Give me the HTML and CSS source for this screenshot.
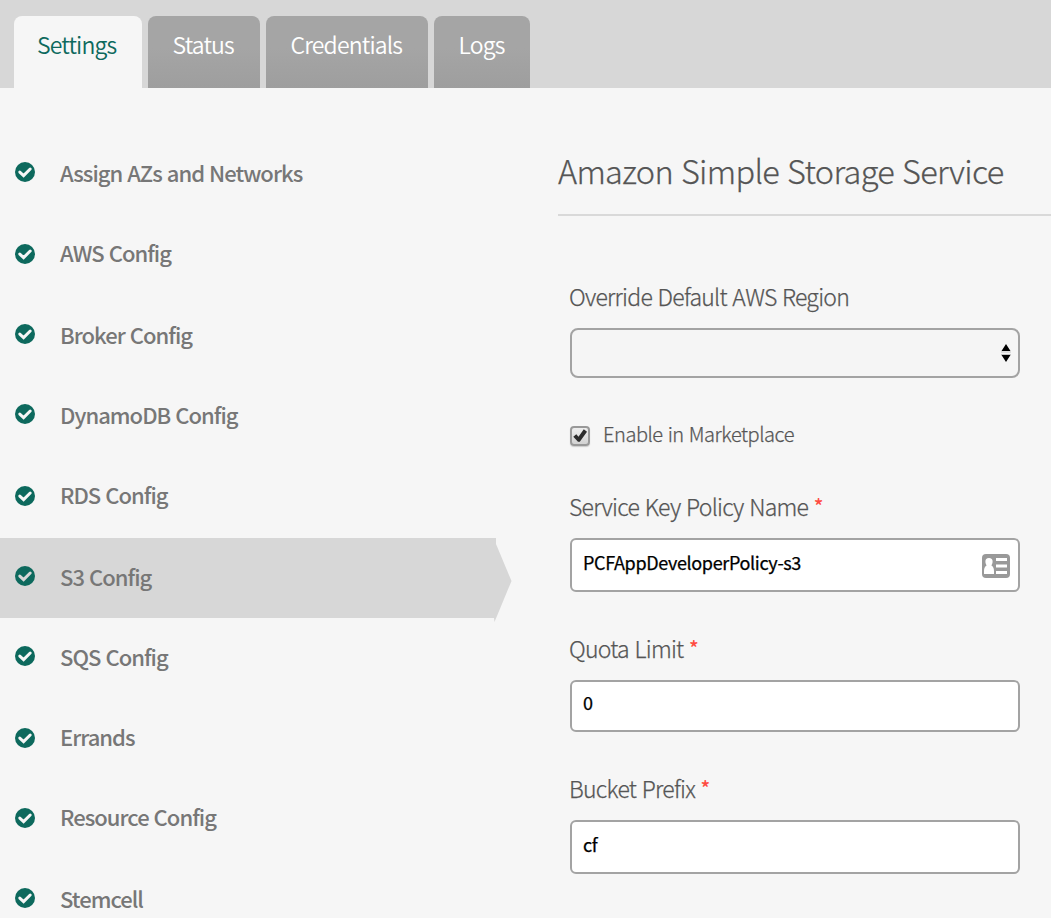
FILE: index.html
```html
<!DOCTYPE html>
<html lang="en">
<head>
<meta charset="utf-8">
<title>Amazon Simple Storage Service</title>
<link rel="stylesheet" href="styles.css">
</head>
<body>
<svg class="defs" width="0" height="0">
  <symbol id="ok" viewBox="0 0 20 20"><circle cx="10" cy="10" r="10" fill="#0d695d"/><path d="M4.8 10.1 8.6 13.6 15.2 7" fill="none" stroke="currentColor" stroke-width="3" stroke-linecap="round" stroke-linejoin="miter"/></symbol>
</svg>
<header class="tabs">
  <a class="tab tab-active"><span>Settings</span></a>
  <a class="tab tab-status"><span>Status</span></a>
  <a class="tab tab-credentials"><span>Credentials</span></a>
  <a class="tab tab-logs"><span>Logs</span></a>
</header>
<main class="page">
  <nav class="nav">
    <a class="item"><svg class="ok"><use href="#ok"/></svg><span>Assign AZs and Networks</span></a>
    <a class="item tall low"><svg class="ok"><use href="#ok"/></svg><span>AWS Config</span></a>
    <a class="item"><svg class="ok"><use href="#ok"/></svg><span>Broker Config</span></a>
    <a class="item"><svg class="ok"><use href="#ok"/></svg><span>DynamoDB Config</span></a>
    <a class="item tall low"><svg class="ok"><use href="#ok"/></svg><span>RDS Config</span></a>
    <a class="item active"><svg class="ok"><use href="#ok"/></svg><span>S3 Config</span><svg class="arrow" viewBox="0 0 18 84"><path d="M0 0H2V6L17.5 43 .5 84 0 80Z"/></svg></a>
    <a class="item"><svg class="ok"><use href="#ok"/></svg><span>SQS Config</span></a>
    <a class="item low"><svg class="ok"><use href="#ok"/></svg><span>Errands</span></a>
    <a class="item tall low"><svg class="ok"><use href="#ok"/></svg><span>Resource Config</span></a>
    <a class="item"><svg class="ok"><use href="#ok"/></svg><span>Stemcell</span></a>
  </nav>
  <section class="content">
    <h1 class="title"><span>Amazon Simple Storage Service</span></h1>
    <form class="form">
      <div class="label"><span>Override Default AWS Region</span></div>
      <div class="field select"><svg class="updown" width="10" height="18" viewBox="0 0 10 18"><path d="M5 0 9.5 7H.5ZM.5 11H9.5L5 18Z"/><path class="shade" d="M0 7.5H10V8.5H0ZM0 10H10V11H0Z"/></svg></div>
      <div class="check"><span class="box"><svg width="16" height="16" viewBox="0 0 16 16"><path d="M1.300 8.800 4.300 6.300 6.500 8.800 11.800 1.200 15 3.700 7.800 13.800H6Z"/></svg></span><span class="check-text">Enable in Marketplace</span></div>
      <div class="label"><span>Service Key Policy Name</span> <sup class="req">*</sup></div>
      <div class="field f1"><span>PCFAppDeveloperPolicy-s3</span><svg class="card" width="28" height="24" viewBox="0 0 28 24"><rect width="28" height="24" rx="4" fill="#999"/><path fill="#fff" d="M7 4a3.600 3.600 0 0 1 3.600 3.700c0 1.600-.6 2.800-1.300 3.600 1.700.9 2.700 3 2.700 5.700V20H2V17c0-2.700 1-4.800 2.700-5.700-.7-.8-1.300-2-1.300-3.600A3.600 3.600 0 0 1 7 4ZM14 4H25V7H14ZM14 10.500H25V13.500H14ZM14 17H25V20H14Z"/></svg></div>
      <div class="label l2"><span>Quota Limit</span> <sup class="req">*</sup></div>
      <div class="field f2"><span>0</span></div>
      <div class="label l3"><span>Bucket Prefix</span> <sup class="req">*</sup></div>
      <div class="field f3"><span>cf</span></div>
    </form>
  </section>
</main>
</body>
</html>
```
FILE: styles.css
```css
* { box-sizing: border-box; }
body {
  margin: 0;
  height: 918px;
  overflow: hidden;
  background: #f6f6f6;
  color: #555;
  font-family: "Noto Sans CJK SC", "Noto Sans", sans-serif;
}
.defs { display: block; }
.tabs {
  display: flex;
  align-items: flex-end;
  gap: 6px;
  height: 88px;
  padding-left: 14px;
  background: #d7d7d7;
}
.tab {
  height: 72px;
  padding-left: 24.5px;
  border-radius: 8px 8px 0 0;
  background: linear-gradient(#a5a5a5 0 45%, #9e9e9e);
  color: #fff;
  font-size: 23px;
  font-weight: 350;
  letter-spacing: -.85px;
  line-height: 57px;
  white-space: nowrap;
}
.tab-active { width: 128px; padding-left: 23px; background: #f6f6f6; color: #0d695d; }
.tab-status { width: 112px; }
.tab-credentials { width: 162px; }
.tab-logs { width: 96px; }
.page { display: flex; height: 830px; }
.nav { width: 558px; padding-top: 46px; }
.item {
  display: flex;
  align-items: flex-start;
  gap: 25px;
  width: 496px;
  height: 80px;
  padding-left: 15px;
  color: #777;
  font-size: 22px;
  font-weight: 500;
  letter-spacing: -.97px;
  word-spacing: 1px;
  line-height: 77px;
  white-space: nowrap;
}
.tall { height: 82px; }
.ok { flex: none; width: 20px; height: 20px; margin-top: 28px; color: #f6f6f6; }
.low .ok { margin-top: 30px; }
.active { position: relative; background: #d7d7d7; }
.active .ok { color: #d7d7d7; }
.arrow { position: absolute; left: 494px; top: 0; width: 18px; height: 84px; fill: #d7d7d7; }
.content { width: 493px; }
.title {
  height: 128px;
  margin: 0;
  padding-top: 56px;
  border-bottom: 2px solid #d9d9d9;
  font-size: 32.5px;
  font-weight: 300;
  letter-spacing: -.7px;
  word-spacing: 1.5px;
  line-height: 52px;
  white-space: nowrap;
  -webkit-text-stroke: .25px #555;
}
.form { width: 462px; padding: 62px 0 0 12px; }
.label {
  height: 50px;
  margin-left: -1px;
  font-size: 23px;
  font-weight: 300;
  letter-spacing: -.75px;
  word-spacing: 1.2px;
  line-height: 37px;
  white-space: nowrap;
  -webkit-text-stroke: .25px #555;
}
.req {
  color: #ff4b41;
  font-size: 20px;
  font-weight: 500;
  line-height: 0;
  vertical-align: 2px;
  -webkit-text-stroke: 0;
}
.field {
  display: flex;
  justify-content: space-between;
  height: 54px;
  padding: 0 8px 0 11px;
  border: 2px solid #a3a3a3;
  border-radius: 6px;
  background: #fff;
  color: #000;
  font-size: 18px;
  letter-spacing: -.35px;
  line-height: 45px;
  -webkit-text-stroke: .25px #000;
}
.select { height: 50px; padding-right: 7px; background: #f5f5f5; justify-content: flex-end; align-items: center; border-radius: 8px; }
.shade { fill: #c4c4c4; }
.card { margin-top: 14px; }
.f2 { height: 52px; line-height: 41px; }
.l2, .l3 { margin-top: 38px; }
.check {
  display: flex;
  gap: 13px;
  height: 110px;
  padding-top: 48px;
  font-size: 20px;
  font-weight: 300;
  letter-spacing: -.45px;
  word-spacing: 1px;
  line-height: 15px;
  -webkit-text-stroke: .25px #555;
}
.box {
  width: 20px;
  height: 20px;
  border: 2px solid #999;
  border-radius: 4px;
  background: linear-gradient(#eee, #d2d2d2);
  box-shadow: 0 1px 1px #ccc;
}
.box svg { display: block; fill: #2b2b2b; }
```
